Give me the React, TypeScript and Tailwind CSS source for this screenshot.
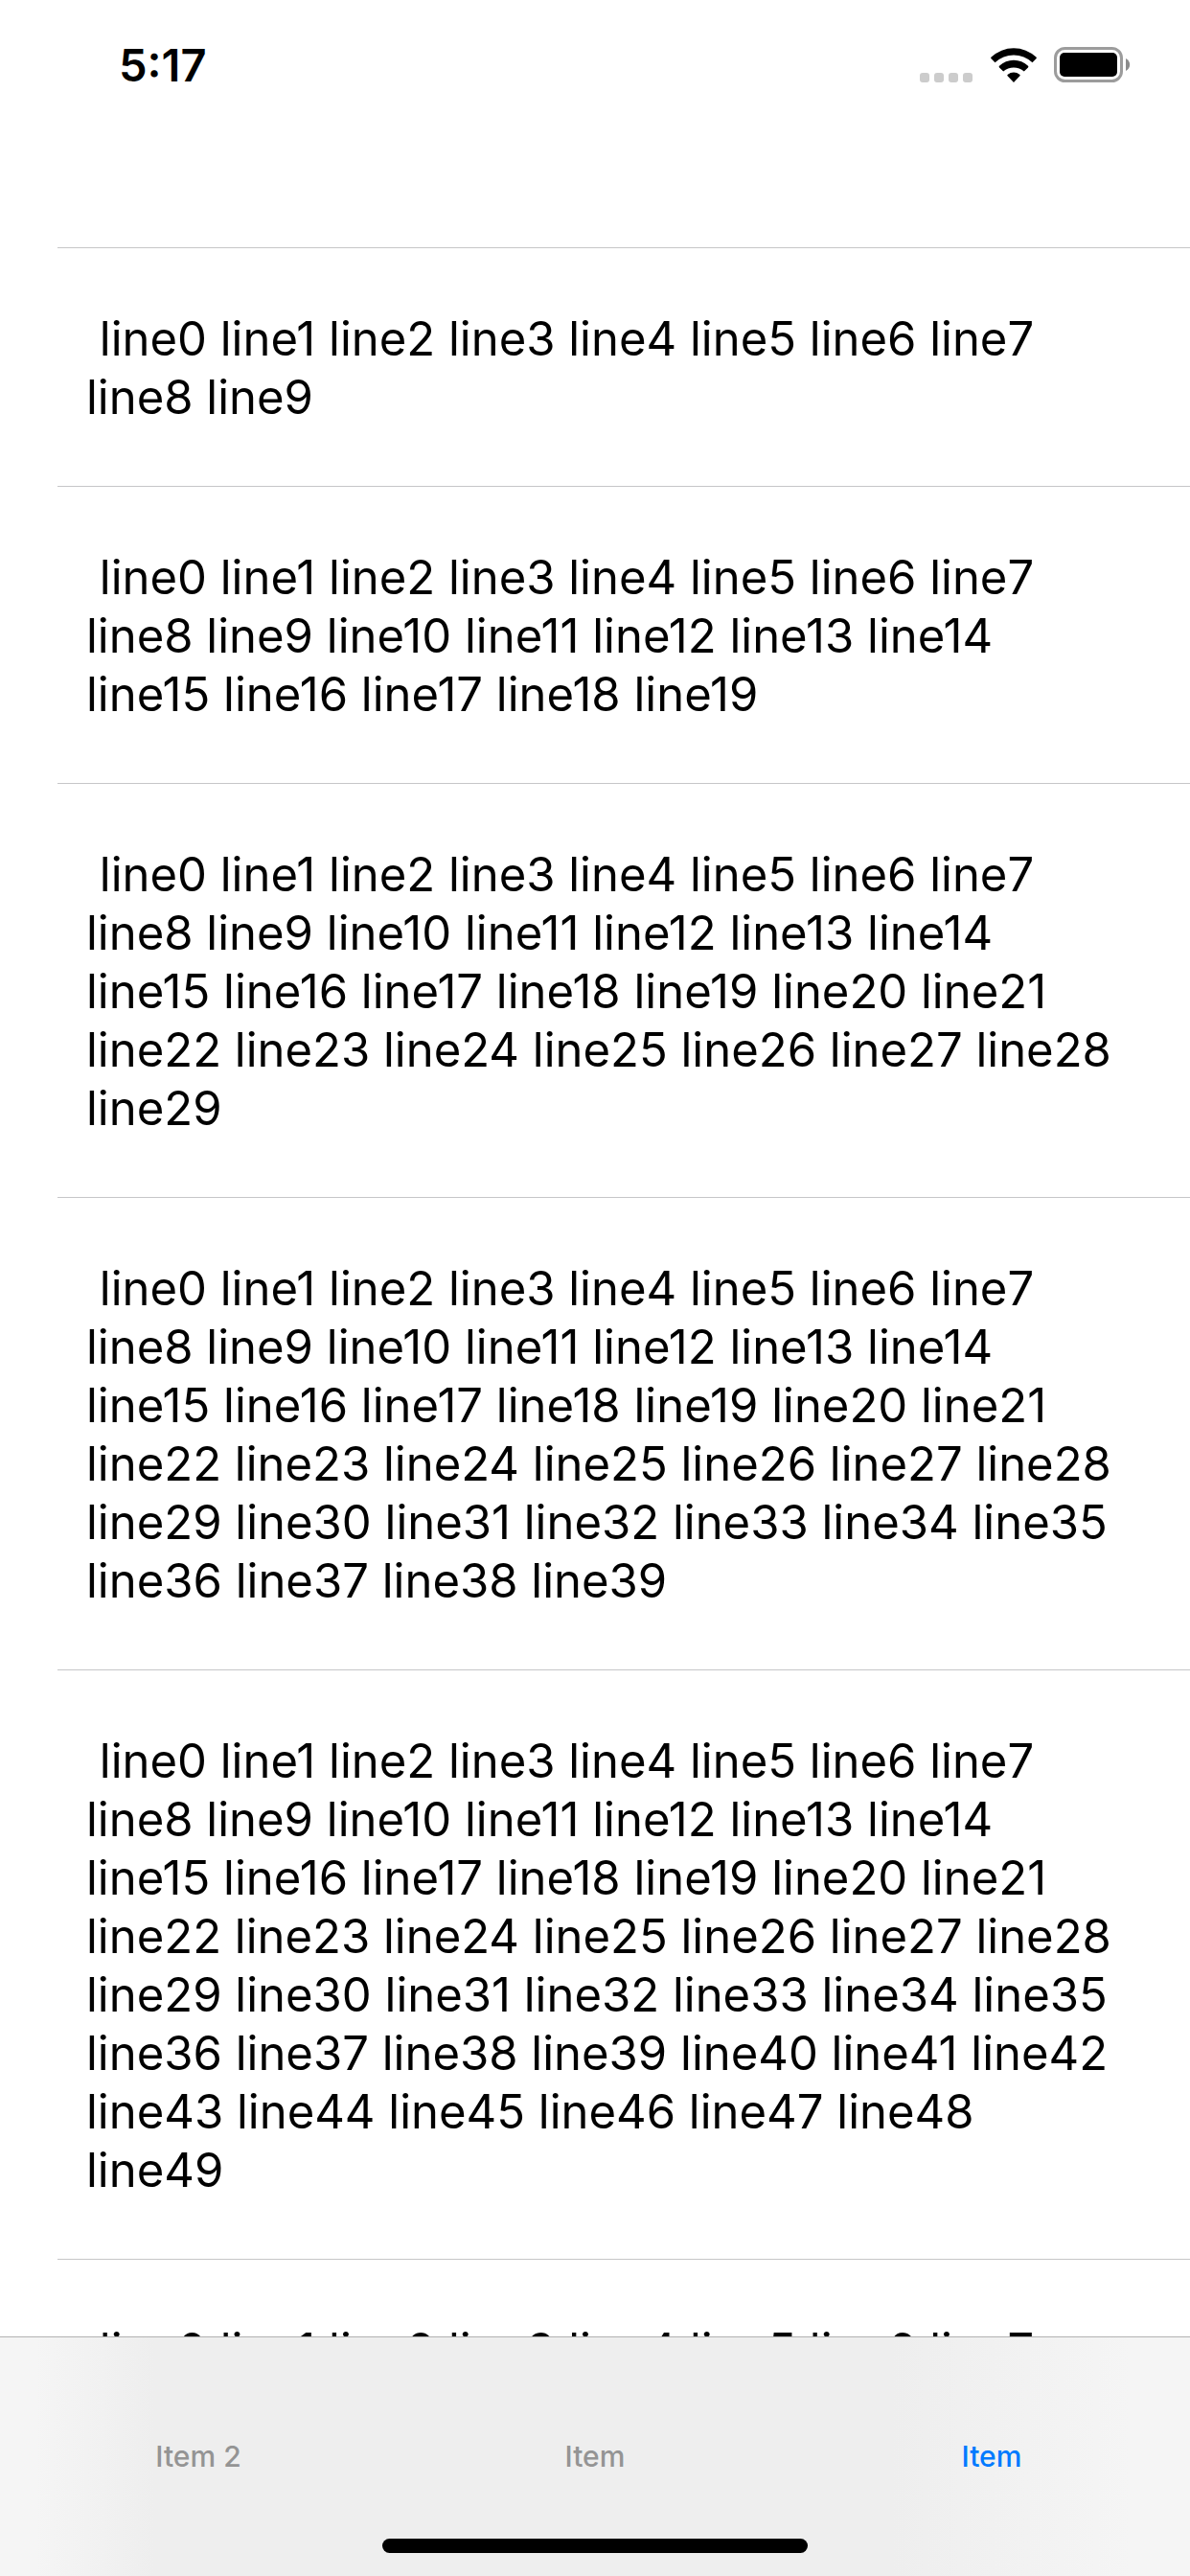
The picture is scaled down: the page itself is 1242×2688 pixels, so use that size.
import React from 'react';

const rows = [10, 20, 30, 40, 50, 60];

const tabs = [
  { id: 'second', label: 'Item 2', active: false },
  { id: 'first', label: 'Item', active: false },
  { id: 'list', label: 'Item', active: true },
];

function rowText(count: number) {
  return Array.from({ length: count }, (_, i) => ` line${i}`).join('');
}

function StatusIcons() {
  return (
    <div className="flex h-12 items-center gap-[18px]">
      <svg width="56" height="36" viewBox="0 0 56 36" fill="#cccccc" aria-hidden="true">
        <rect x="0" y="26" width="10" height="10" rx="3" />
        <rect x="15" y="26" width="10" height="10" rx="3" />
        <rect x="30" y="26" width="10" height="10" rx="3" />
        <rect x="45" y="26" width="10" height="10" rx="3" />
      </svg>
      <svg width="48" height="36" viewBox="0 0 48 36" aria-hidden="true">
        <path d="M.6 11.200Q-.3 10.400.6 9.600A34 34 0 0 1 47.400 9.600Q48.300 10.400 47.400 11.200L43.500 15.200A28.300 28.300 0 0 0 4.500 15.200Z" />
        <path d="M9 20.400Q8.200 19.600 9 18.800A21.800 21.800 0 0 1 39 18.800Q39.800 19.600 39 20.400L34.800 24.500A16.500 16.500 0 0 0 13.200 24.500Z" />
        <path d="M17.600 29.200Q16.800 28.400 17.800 27.700A9.800 9.800 0 0 1 30.200 27.700Q31.200 28.400 30.400 29.200L24 36Z" />
      </svg>
      <svg width="80" height="38" viewBox="0 0 80 38" aria-hidden="true">
        <rect x="1.500" y="1.500" width="69" height="34" rx="10" fill="none" stroke="#9c9c9c" strokeWidth="3" />
        <rect x="6" y="6" width="60" height="25" rx="5" />
        <path d="M75 12v13c5.500-2.500 5.500-10.500 0-13z" fill="#8c8c8c" />
      </svg>
    </div>
  );
}

export default function App() {
  return (
    <div className="flex h-screen flex-col overflow-hidden bg-white font-['Inter','Liberation_Sans',sans-serif] text-black">
      <header className="flex h-[258px] shrink-0 items-start justify-between pt-11 pr-[62px] pl-[124px]">
        <time className="text-[47px] leading-[48px] font-semibold">5:17</time>
        <StatusIcons />
      </header>
      <main className="min-h-0 flex-1 overflow-y-auto [scrollbar-width:none]">
        <ul className="pl-[60px]">
          {rows.map((count) => (
            <li key={count} className="border-t border-[#c6c6c8] pt-16 pr-[79px] pb-[62px] pl-[30px]">
              <p className="text-[49px] leading-[61px] whitespace-pre-wrap">{rowText(count)}</p>
            </li>
          ))}
        </ul>
      </main>
      <nav className="flex h-[250px] shrink-0 flex-col items-center border-t border-[#b2b2b2] bg-[linear-gradient(to_right,#f5f5f5_3%,#eeeeee_13%,#eeeeee_75%,#f5f5f5_95%)]">
        <div className="grid w-full flex-1 grid-cols-3">
          {tabs.map((tab) => (
            <button
              key={tab.id}
              className={`pt-[38px] text-[30px] leading-9 font-medium ${tab.active ? 'text-[#007aff]' : 'text-[#949494]'}`}
            >
              {tab.label}
            </button>
          ))}
        </div>
        <div className="mb-6 h-[15px] w-[444px] rounded-full bg-black" />
      </nav>
    </div>
  );
}
